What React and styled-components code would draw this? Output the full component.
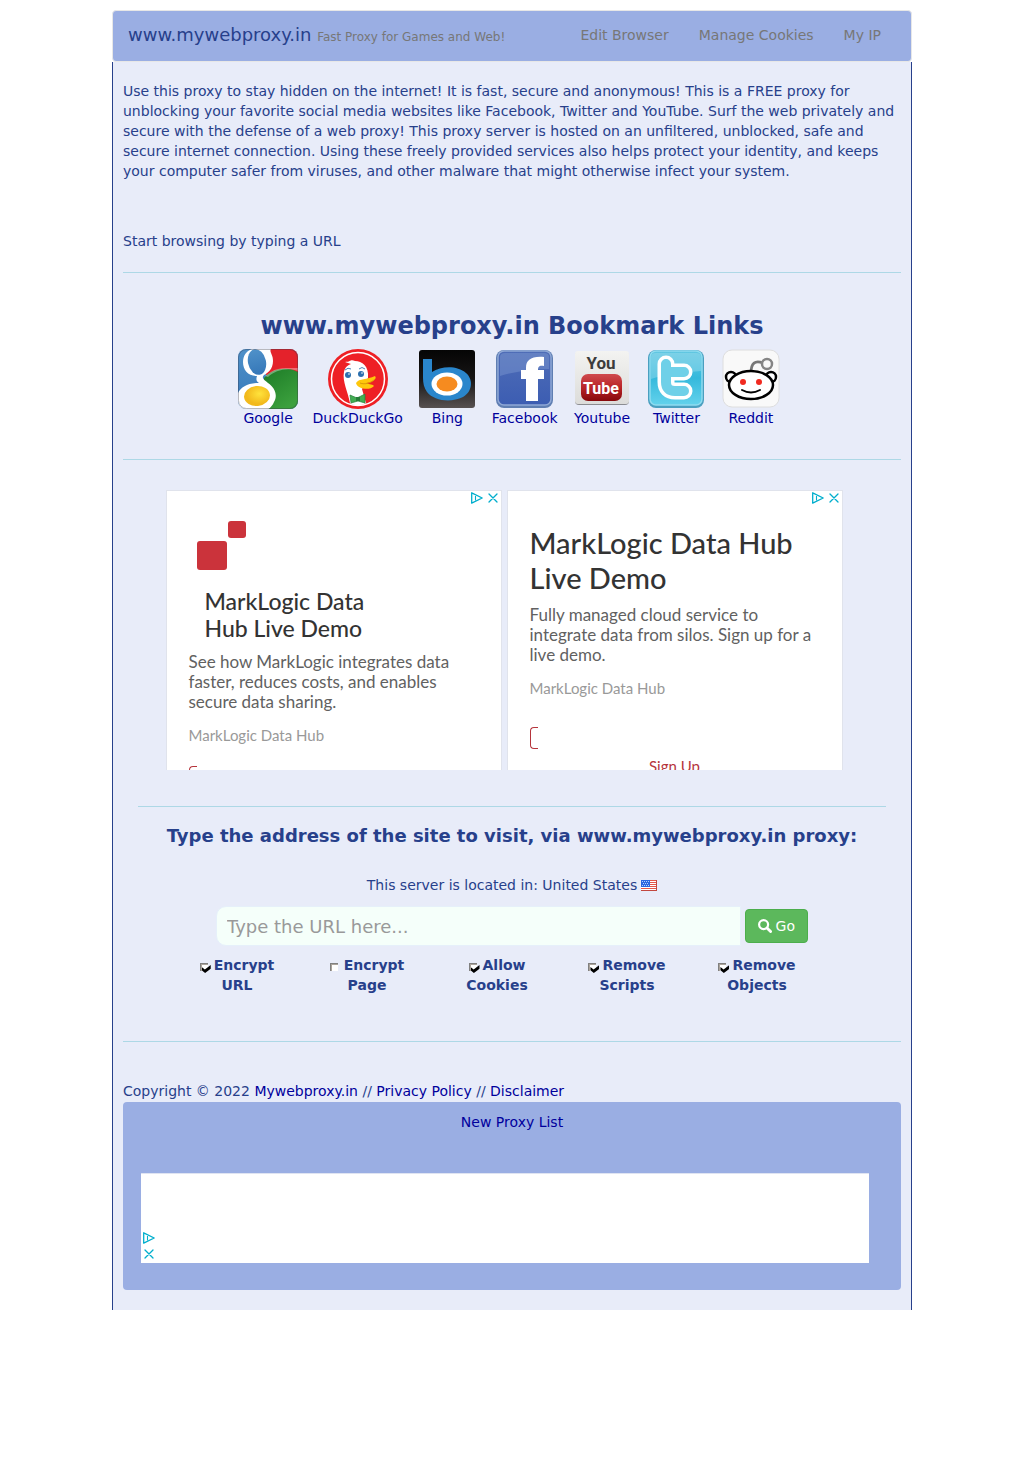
import React from "react";
import styled, { createGlobalStyle } from "styled-components";

const navy = "#27408b";
const linkBlue = "#00009c";
const barBlue = "#9aaee3";
const paper = "#e8ecf9";
const adRed = "#cb333b";
const adTeal = "#00aecd";

const GlobalStyle = createGlobalStyle`
  *, *::before, *::after { box-sizing: border-box; }
  body {
    margin: 0;
    background: #fff;
    color: ${navy};
    font: 14px/20px "DejaVu Sans", Verdana, sans-serif;
  }
  svg { display: block; }
`;

const Page = styled.div`
  max-width: 800px;
  margin: 10px auto;
`;

const Header = styled.header`
  display: flex;
  justify-content: space-between;
  align-items: center;
  min-height: 52px;
  padding: 0 15px;
  background: ${barBlue};
  border: 1px solid #e7e7e7;
  border-radius: 4px;
`;

const Brand = styled.a`
  color: ${navy};
  font-size: 18px;
  text-decoration: none;
`;

const Tagline = styled.small`
  color: #777;
  font-size: 12px;
`;

const Nav = styled.nav`
  display: flex;
  padding-bottom: 2px;
`;

const NavLink = styled.a`
  padding: 0 15px;
  color: #777;
  text-decoration: none;
`;

const Content = styled.main`
  padding: 19px 10px 20px;
  background: ${paper};
  border: solid ${navy};
  border-width: 0 1px;
`;

const Intro = styled.p`
  margin: 0 0 50px;
`;

const Lead = styled.p`
  margin: 0;
`;

const Rule = styled.hr`
  height: 1px;
  margin: ${(p) => p.$space};
  border: 0;
  background: #add8e6;
`;

const Title = styled.h2`
  margin: 0 0 10px;
  font-size: 24px;
  line-height: 26px;
  text-align: center;
`;

const Bookmarks = styled.nav`
  padding-right: 5px;
  line-height: 18px;
  text-align: center;
`;

const Bookmark = styled.a`
  display: inline-flex;
  flex-direction: column;
  align-items: center;
  min-width: 60px;
  margin: 0 5px;
  color: ${linkBlue};
  text-decoration: none;
`;

const AdSlot = styled.div`
  display: flex;
  justify-content: center;
  gap: 5px;
  padding: 0 34px 0 18px;
`;

const Ad = styled.section`
  position: relative;
  flex: 0 1 336px;
  height: 280px;
  padding: ${(p) => p.$top} 22px 0;
  overflow: hidden;
  background: #fff;
  border: 1px solid #e0e3ec;
  border-bottom: 0;
  color: #616161;
  font-family: Lato, "Open Sans", sans-serif;
`;

const AdTitle = styled.h3`
  margin: 0;
  padding-left: ${(p) => (p.$small ? "16px" : "0")};
  color: #333;
  font-size: ${(p) => (p.$small ? "23px" : "29px")};
  line-height: ${(p) => (p.$small ? "27px" : "35px")};
  font-weight: 500;
`;

const AdText = styled.p`
  margin: 10px 0 13px;
  font-size: 17px;
  line-height: 20px;
`;

const AdSource = styled.p`
  margin: 0;
  color: #999;
  font-size: 15px;
`;

const AdLogo = styled.div`
  padding: 0 0 17px 8px;
`;

const AdBracket = styled.div`
  width: 8px;
  height: 22px;
  margin-top: ${(p) => p.$top};
  border: 1px solid #b5343b;
  border-right: 0;
  border-radius: 4px 0 0 4px;
`;

const AdAction = styled.a`
  display: block;
  margin-top: 7px;
  color: #b5343b;
  font-size: 15px;
  text-align: center;
  text-decoration: none;
`;

const AdControls = styled.div`
  position: absolute;
  display: flex;
  flex-direction: ${(p) => (p.$stacked ? "column" : "row")};
  gap: 4px;
  ${(p) => (p.$stacked ? "left: 2px; bottom: 3px;" : "right: 2px; top: 1px;")}
`;

const AdControl = styled.button`
  width: 12px;
  height: 12px;
  padding: 0;
  border: 0;
  background: none;
`;

const FormHeading = styled.h4`
  margin: 0 0 29px;
  font-size: 18px;
  line-height: 20px;
  text-align: center;
`;

const ServerLine = styled.p`
  display: flex;
  justify-content: center;
  align-items: center;
  gap: 4px;
  margin: 0 0 11px;
`;

const SearchRow = styled.div`
  display: flex;
  align-items: center;
  gap: 4px;
  padding: 0 93px;
`;

const UrlInput = styled.input`
  flex: 1;
  min-width: 0;
  height: 40px;
  padding: 0 10px;
  border: 1px solid #e6f0fa;
  border-radius: 10px 0 0 10px;
  background: #f5fffa;
  color: ${navy};
  font: 18px/24px "DejaVu Sans", Verdana, sans-serif;
  &::placeholder { color: #999; opacity: 1; }
`;

const GoButton = styled.button`
  display: flex;
  align-items: center;
  gap: 4px;
  height: 34px;
  padding: 0 12px;
  border: 1px solid #4cae4c;
  border-radius: 4px;
  background: #5cb85c;
  color: #fff;
  font: 14px/20px "DejaVu Sans", Verdana, sans-serif;
`;

const Options = styled.div`
  display: grid;
  grid-template-columns: repeat(5, 130px);
  justify-content: center;
  padding: 9px 30px 0 0;
`;

const Option = styled.label`
  padding: 0 15px;
  font-weight: bold;
  text-align: center;
`;

const Checkbox = styled.input`
  appearance: none;
  position: relative;
  width: 8px;
  height: 8px;
  margin: 0 6px 0 0;
  border: solid #808080;
  border-width: 1px 0 0 1px;
  background: #fff;
  box-shadow: inset 1px 1px #aaa39b;
  vertical-align: -1px;
  &:checked::after {
    content: "";
    position: absolute;
    left: 1px;
    top: 1px;
    width: 9px;
    height: 8px;
    background: #000;
    clip-path: polygon(0 25%, 35% 55%, 100% 0, 100% 46%, 38% 100%, 0 66%);
  }
`;

const Copyright = styled.p`
  margin: 0 0 1px;
`;

const TextLink = styled.a`
  color: ${linkBlue};
  text-decoration: none;
`;

const Footer = styled.footer`
  padding: 10px 32px 27px 18px;
  background: ${barBlue};
  border-radius: 4px;
`;

const FooterLinks = styled.div`
  margin: 0 0 41px;
  padding-left: 14px;
  text-align: center;
`;

const Banner = styled.div`
  position: relative;
  height: 90px;
  background: #fff;
  border-top: 1px solid #dfe4f2;
`;

const GoogleIcon = () => (
  <svg width="60" height="60" viewBox="0 0 60 60" aria-hidden="true">
    <defs>
      <clipPath id="gclip"><rect width="60" height="60" rx="8" /></clipPath>
      <linearGradient id="ggreen" x1="0" y1="0" x2="0.6" y2="1">
        <stop offset="0" stopColor="#1c7a26" /><stop offset="1" stopColor="#3ba03d" />
      </linearGradient>
      <linearGradient id="gblue" x1="0" y1="0" x2="0" y2="1">
        <stop offset="0" stopColor="#4f91c9" /><stop offset="1" stopColor="#3577b8" />
      </linearGradient>
      <radialGradient id="gyellow" cx="0.6" cy="0.4">
        <stop offset="0" stopColor="#ffe33c" /><stop offset="1" stopColor="#f2b91c" />
      </radialGradient>
    </defs>
    <g clipPath="url(#gclip)">
      <rect width="60" height="60" fill="url(#gblue)" />
      <path d="M28 0H60V26H28Z" fill="#e4222b" />
      <path d="M26 29C34 19 50 17 60 23V60H24Z" fill="url(#ggreen)" />
      <path d="M14 0H33C31 3 35 5 35 12C35 20 30 24 26 26C23 29 26 31 30 34C37 39 40 46 36 53C34 58 30 61 26 62H0V44C3 38 10 34 21 34C18 32 18 30 19 27C10 27 5 21 5 13C5 7 8 2 14 0Z" fill="#fff" />
      <path d="M33 23C37 20 43 19 48 19H60V22C50 18 37 21 30 28L27 27Z" fill="#fff" opacity="0.35" />
      <ellipse cx="19" cy="13" rx="9" ry="13" transform="rotate(-12 19 13)" fill="url(#gblue)" />
      <ellipse cx="19" cy="47" rx="13" ry="10" transform="rotate(-6 19 47)" fill="url(#gyellow)" />
    </g>
    <rect x="0.5" y="0.5" width="59" height="59" rx="8" fill="none" stroke="#334" strokeOpacity="0.35" />
  </svg>
);

const DuckIcon = () => (
  <svg width="60" height="60" viewBox="0 0 60 60" aria-hidden="true">
    <circle cx="30" cy="30" r="30" fill="#ee2025" />
    <circle cx="30" cy="30" r="26.5" fill="none" stroke="#fff" strokeWidth="1.5" />
    <path d="M22 54C20 43 14 32 16 23C17 18 20 16 23 15L17 13C23 13 22 10 27 12C34 12 41 17 40 29L34 40L38 54C33 57 26 57 22 54Z" fill="#fff" />
    <path d="M28 34C31 29 39 31 47 27C50 30 43 34 38 34C42 36 45 35 46 37C42 42 29 40 28 34Z" fill="#fec70b" />
    <path d="M32 34C37 36 43 34 47 30" fill="none" stroke="#d99a07" />
    <circle cx="20" cy="26" r="3" fill="#2b6fae" /><circle cx="33" cy="25" r="3" fill="#2b6fae" />
    <circle cx="21" cy="25" r="0.8" fill="#fff" /><circle cx="34" cy="24" r="0.8" fill="#fff" />
    <path d="M17 21Q20 18 23 20M31 20Q34 17 37 20" fill="none" stroke="#4a84b8" />
    <path d="M22 46L29 49L37 45V54L30 52L23 54Z" fill="#42ad52" stroke="#267e38" strokeWidth="0.7" />
    <path d="M28 48H32V52H28Z" fill="#267e38" />
  </svg>
);

const BingIcon = () => (
  <svg width="60" height="60" viewBox="0 0 60 60" aria-hidden="true">
    <defs>
      <linearGradient id="bdark" x1="0" y1="0" x2="0" y2="1">
        <stop offset="0" stopColor="#050505" /><stop offset="0.5" stopColor="#171515" /><stop offset="1" stopColor="#575151" />
      </linearGradient>
    </defs>
    <rect x="2" y="1" width="56" height="58" rx="3" fill="url(#bdark)" />
    <path d="M6 10H15V23C24 17 40 16 49 24C57 31 55 43 46 48C34 54 17 52 10 43C7 39 6 34 6 29Z" fill="#2a86cc" />
    <ellipse cx="30" cy="35" rx="15.5" ry="11.5" fill="#fff" />
    <ellipse cx="30" cy="35" rx="10.5" ry="7.5" fill="#f68b1f" />
  </svg>
);

const FacebookIcon = () => (
  <svg width="60" height="60" viewBox="0 0 60 60" aria-hidden="true">
    <defs>
      <linearGradient id="fblue" x1="0" y1="0" x2="0" y2="1">
        <stop offset="0" stopColor="#4f6db7" /><stop offset="1" stopColor="#3c5db2" />
      </linearGradient>
    </defs>
    <rect x="1" y="1" width="57" height="58" rx="8" fill="#5f7eb2" />
    <rect x="3" y="2" width="53" height="54" rx="6" fill="url(#fblue)" stroke="#8fa8d6" strokeWidth="1.5" />
    <path d="M5 8Q5 4 10 4H49Q54 4 54 8V20C38 20 22 22 5 27Z" fill="#8ea8da" opacity="0.35" />
    <path d="M31 52V30H26V21H31V19C31 11 36 7 49 8V17C44 16 43 18 43 21H49V30H43V52Z" fill="#fff" />
  </svg>
);

const YoutubeIcon = () => (
  <svg width="60" height="60" viewBox="0 0 60 60" aria-hidden="true">
    <defs>
      <linearGradient id="ypaper" x1="0" y1="0" x2="0" y2="1">
        <stop offset="0" stopColor="#f3f3f1" /><stop offset="1" stopColor="#dcdcda" />
      </linearGradient>
      <linearGradient id="yred" x1="0" y1="0" x2="0" y2="1">
        <stop offset="0" stopColor="#cf4a4d" /><stop offset="0.5" stopColor="#b92428" /><stop offset="1" stopColor="#86090c" />
      </linearGradient>
    </defs>
    <rect x="3" y="3" width="54" height="53" rx="4" fill="#8b8c91" />
    <rect x="3" y="2" width="54" height="53" rx="3" fill="url(#ypaper)" />
    <rect x="9" y="25" width="41" height="27" rx="7" fill="url(#yred)" />
    <text x="29" y="20" textAnchor="middle" fill="#3c3c3c" fontFamily="Roboto, sans-serif" fontSize="17" fontWeight="bold">You</text>
    <text x="29" y="45" textAnchor="middle" fill="#fff" fontFamily="Roboto, sans-serif" fontSize="16" fontWeight="bold">Tube</text>
  </svg>
);

const TwitterIcon = () => (
  <svg width="60" height="60" viewBox="0 0 60 60" aria-hidden="true">
    <defs>
      <linearGradient id="tsky" x1="0" y1="0" x2="0" y2="1">
        <stop offset="0" stopColor="#63c7e2" /><stop offset="0.5" stopColor="#35b9dc" /><stop offset="1" stopColor="#63d2ec" />
      </linearGradient>
    </defs>
    <rect x="2" y="1" width="56" height="58" rx="8" fill="#4a9fc0" />
    <rect x="4" y="2" width="52" height="54" rx="6" fill="url(#tsky)" stroke="#8fdcf0" strokeWidth="1.5" />
    <path d="M5 8Q5 4 10 4H50Q55 4 55 8V22C40 23 20 25 5 30Z" fill="#a7e2f0" opacity="0.4" />
    <path d="M20 15V33Q20 42 29 42H38M20 23H38" fill="none" stroke="#fff" strokeWidth="17" strokeLinecap="round" strokeLinejoin="round" />
    <path d="M20 15V33Q20 42 29 42H38M20 23H38" fill="none" stroke="#6fd0e8" strokeWidth="10" strokeLinecap="round" strokeLinejoin="round" />
  </svg>
);

const RedditIcon = () => (
  <svg width="60" height="60" viewBox="0 0 60 60" aria-hidden="true">
    <rect x="2" y="1" width="56" height="57" rx="9" fill="#f9f9f9" stroke="#dedede" />
    <path d="M30 24C30 14 34 11 42 14" fill="none" stroke="#777" strokeWidth="2.8" />
    <circle cx="46" cy="15" r="5" fill="#f9f9f9" stroke="#858585" strokeWidth="2.5" />
    <circle cx="10" cy="28" r="5" fill="#fff" stroke="#000" strokeWidth="2.5" />
    <circle cx="50" cy="28" r="5" fill="#fff" stroke="#000" strokeWidth="2.5" />
    <ellipse cx="30" cy="36" rx="22" ry="14" fill="#fff" stroke="#000" strokeWidth="2.5" />
    <circle cx="22" cy="33" r="3" fill="#f12a20" /><circle cx="38" cy="33" r="3" fill="#f12a20" />
    <path d="M21 41Q30 46 39 41" fill="none" stroke="#000" strokeWidth="2" strokeLinecap="round" />
  </svg>
);

const FlagIcon = () => (
  <svg width="16" height="11" viewBox="0 0 16 11" role="img" aria-label="US flag">
    <rect width="16" height="11" fill="#fff" />
    <path d="M0 .5H16M0 2.5H16M0 4.5H16M0 6.5H16M0 8.5H16M0 10.5H16" stroke="#e4574a" />
    <rect width="9" height="7" fill="#2a66e0" />
    <path d="M1 1.5H8M2 3.5H8M1 5.5H8" stroke="#b5d0ff" strokeDasharray="1 1" />
    <path d="M15.5 0V11M0 10.5H16" stroke="#c2473f" />
  </svg>
);

const SearchIcon = () => (
  <svg width="14" height="14" viewBox="0 0 14 14" aria-hidden="true">
    <circle cx="5.6" cy="5.6" r="4.5" fill="none" stroke="#fff" strokeWidth="2.2" />
    <path d="M9 9L12.6 12.6" stroke="#fff" strokeWidth="2.8" strokeLinecap="round" />
  </svg>
);

const Controls = ({ stacked }) => (
  <AdControls $stacked={stacked}>
    <AdControl type="button" aria-label="Ad choices">
      <svg width="12" height="12" viewBox="0 0 12 12">
        <path d="M.7 .8V11.2L11.2 6Z" fill="none" stroke={adTeal} strokeWidth="1.3" strokeLinejoin="round" />
        <path d="M4.5 4V8.5" fill="none" stroke={adTeal} strokeWidth="1.1" />
      </svg>
    </AdControl>
    <AdControl type="button" aria-label="Close ad">
      <svg width="12" height="12" viewBox="0 0 12 12">
        <path d="M2 2L10 10M10 2L2 10" stroke={adTeal} strokeWidth="1.3" strokeLinecap="round" />
      </svg>
    </AdControl>
  </AdControls>
);

const bookmarks = [
  ["Google", GoogleIcon],
  ["DuckDuckGo", DuckIcon],
  ["Bing", BingIcon],
  ["Facebook", FacebookIcon],
  ["Youtube", YoutubeIcon],
  ["Twitter", TwitterIcon],
  ["Reddit", RedditIcon],
];

const options = [
  ["Encrypt URL", true],
  ["Encrypt Page", false],
  ["Allow Cookies", true],
  ["Remove Scripts", true],
  ["Remove Objects", true],
];

export default function App() {
  return (
    <>
      <GlobalStyle />
      <Page>
        <Header>
          <Brand href="#">www.mywebproxy.in <Tagline>Fast Proxy for Games and Web!</Tagline></Brand>
          <Nav>
            <NavLink href="#">Edit Browser</NavLink>
            <NavLink href="#">Manage Cookies</NavLink>
            <NavLink href="#">My IP</NavLink>
          </Nav>
        </Header>
        <Content>
          <Intro>
            Use this proxy to stay hidden on the internet! It is fast, secure and anonymous! This is a FREE proxy
            for unblocking your favorite social media websites like Facebook, Twitter and YouTube. Surf the web
            privately and secure with the defense of a web proxy! This proxy server is hosted on an unfiltered,
            unblocked, safe and secure internet connection. Using these freely provided services also helps protect
            your identity, and keeps your computer safer from viruses, and other malware that might otherwise infect
            your system.
          </Intro>
          <Lead>Start browsing by typing a URL</Lead>
          <Rule $space="21px 0 40px" />
          <Title>www.mywebproxy.in Bookmark Links</Title>
          <Bookmarks>
            {bookmarks.map(([name, Icon]) => (
              <React.Fragment key={name}>
                <Bookmark href="#"><Icon />{name}</Bookmark>{" "}
              </React.Fragment>
            ))}
          </Bookmarks>
          <Rule $space="32px 0 30px" />
          <AdSlot>
            <Ad $top="30px">
              <Controls />
              <AdLogo>
                <svg width="50" height="50" viewBox="0 0 50 50" aria-hidden="true">
                  <rect x="0" y="20" width="30" height="29" rx="3" fill={adRed} />
                  <rect x="31" y="0" width="18" height="17" rx="3" fill={adRed} />
                </svg>
              </AdLogo>
              <AdTitle $small>MarkLogic Data<br />Hub Live Demo</AdTitle>
              <AdText>See how MarkLogic integrates data faster, reduces costs, and enables secure data sharing.</AdText>
              <AdSource>MarkLogic Data Hub</AdSource>
              <AdBracket $top="21px" />
            </Ad>
            <Ad $top="34px">
              <Controls />
              <AdTitle>MarkLogic Data Hub Live Demo</AdTitle>
              <AdText>Fully managed cloud service to integrate data from silos. Sign up for a live demo.</AdText>
              <AdSource>MarkLogic Data Hub</AdSource>
              <AdBracket $top="29px" />
              <AdAction href="#">Sign Up</AdAction>
            </Ad>
          </AdSlot>
          <Rule $space="36px 15px 19px" />
          <form onSubmit={(e) => e.preventDefault()}>
            <FormHeading>Type the address of the site to visit, via www.mywebproxy.in proxy:</FormHeading>
            <ServerLine>This server is located in: United States <FlagIcon /></ServerLine>
            <SearchRow>
              <UrlInput type="text" aria-label="URL" placeholder="Type the URL here..." />
              <GoButton type="submit"><SearchIcon />Go</GoButton>
            </SearchRow>
            <Options>
              {options.map(([name, on]) => (
                <Option key={name}><Checkbox type="checkbox" defaultChecked={on} />{name}</Option>
              ))}
            </Options>
          </form>
          <Rule $space="46px 0 39px" />
          <Copyright>
            Copyright © 2022 <TextLink href="#">Mywebproxy.in</TextLink> // <TextLink href="#">Privacy Policy</TextLink> // <TextLink href="#">Disclaimer</TextLink>
          </Copyright>
          <Footer>
            <FooterLinks><TextLink href="#">New Proxy List</TextLink></FooterLinks>
            <Banner><Controls stacked /></Banner>
          </Footer>
        </Content>
      </Page>
    </>
  );
}
